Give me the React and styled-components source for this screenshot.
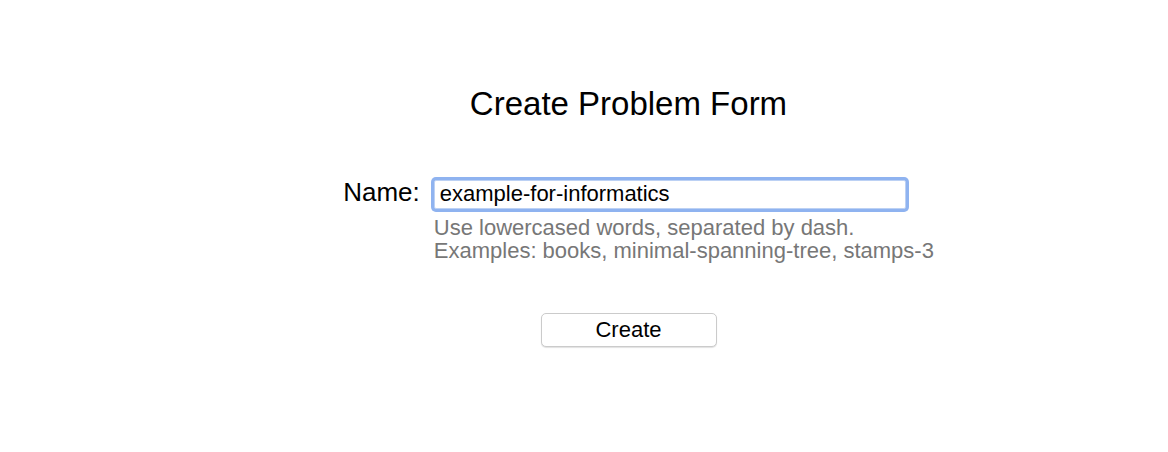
import React from "react";
import styled, { createGlobalStyle } from "styled-components";

const Global = createGlobalStyle`
  html, body { margin: 0; padding: 0; background: #ffffff; }
  body { font-family: "Liberation Sans", Arial, Helvetica, sans-serif; color: #000; }
`;

const Page = styled.main`
  box-sizing: border-box;
  width: 1168px;
  min-height: 452px;
  padding: 85px 0 0 89px;
  display: flex;
  flex-direction: column;
  align-items: center;
`;

const Title = styled.h1`
  margin: 0;
  font-size: 33px;
  font-weight: 400;
  line-height: 38px;
  color: #000;
`;

const FormGrid = styled.form`
  margin: 54px 8px 0 0;
  display: grid;
  grid-template-columns: auto 472px;
  column-gap: 14px;
  align-items: baseline;
`;

const Label = styled.label`
  font-size: 26px;
  line-height: 30px;
  color: #000;
  text-align: right;
`;

const TextInput = styled.input`
  box-sizing: border-box;
  width: 472px;
  height: 29px;
  margin: 0;
  padding: 0 5px;
  font-family: "Liberation Sans", Arial, Helvetica, sans-serif;
  font-size: 22px;
  color: #000;
  background: #fff;
  border: 1px solid #bcd1f4;
  border-radius: 2px;
  box-shadow: 0 0 0 3px #8fb3f0;
  outline: none;
`;

const Hint = styled.div`
  grid-column: 2;
  margin-top: 7px;
  font-size: 22px;
  line-height: 23px;
  color: #777777;
  white-space: nowrap;
`;

const Actions = styled.div`
  margin-top: 51px;
  display: flex;
  justify-content: center;
`;

const Button = styled.button`
  box-sizing: border-box;
  width: 176px;
  height: 34px;
  padding: 0;
  font-family: "Liberation Sans", Arial, Helvetica, sans-serif;
  font-size: 22px;
  color: #000;
  background: #fff;
  border: 1px solid #cbcbcb;
  border-radius: 5px;
  box-shadow: 0 1px 1px rgba(0, 0, 0, 0.12);
  cursor: pointer;
`;

export default function App() {
  return (
    <>
      <Global />
      <Page>
        <Title>Create Problem Form</Title>
        <FormGrid onSubmit={(e) => e.preventDefault()}>
          <Label htmlFor="name">Name:</Label>
          <TextInput id="name" defaultValue="example-for-informatics" />
          <Hint>
            Use lowercased words, separated by dash.
            <br />
            Examples: books, minimal-spanning-tree, stamps-3
          </Hint>
        </FormGrid>
        <Actions>
          <Button type="button">Create</Button>
        </Actions>
      </Page>
    </>
  );
}
